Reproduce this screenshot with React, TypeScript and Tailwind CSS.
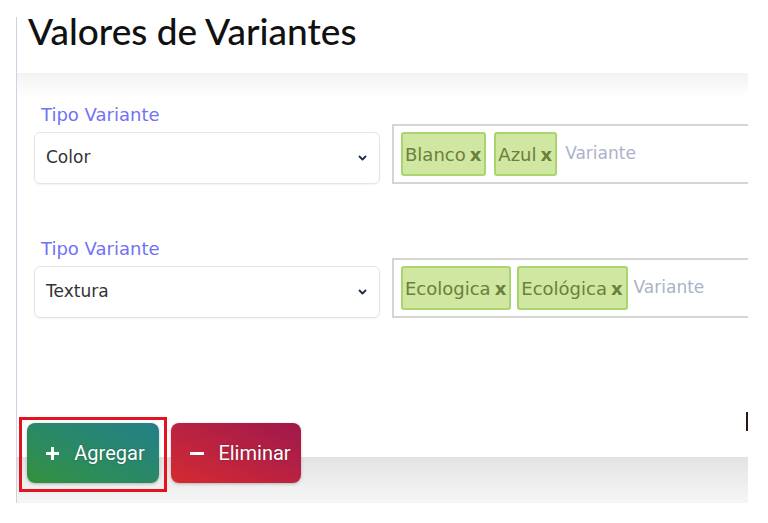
function Chevron() {
  return (
    <svg width="9" height="6" viewBox="0 0 9 6" className="shrink-0">
      <path d="M1.5 1.5 L4.5 4.5 L7.5 1.5" fill="none" stroke="#1e2a4a" strokeWidth="1.8" strokeLinecap="round" strokeLinejoin="round" />
    </svg>
  );
}

function Tag({ label }: { label: string }) {
  return (
    <span className="flex h-[44px] items-center gap-[4px] rounded-[3px] border-2 border-[#a9d46e] bg-[#d0e7a1] pl-[2px] pr-[3px] text-[18px] text-[#6c7f3c]">
      {label}
      <span className="font-bold">x</span>
    </span>
  );
}

function VariantRow({ tipo, values, gap }: { tipo: string; values: string[]; gap: string }) {
  return (
    <div className="flex items-end gap-3">
      <div className="flex w-[346px] shrink-0 flex-col">
        <label className="mb-[6px] pl-[7px] text-[18px] leading-[22px] text-[#7272f7]">Tipo Variante</label>
        <div className="flex h-[52px] items-center justify-between rounded-md border border-[#e4e4e4] pl-[11px] pr-[12px] text-[17px] text-[#333] shadow-[0_1px_2px_rgba(0,0,0,0.05)]">
          <span>{tipo}</span>
          <Chevron />
        </div>
      </div>
      <div className={`flex h-[60px] flex-1 items-center border-2 border-r-0 border-[#d5d5d5] pl-[7px] ${gap}`}>
        {values.map((v) => (
          <Tag key={v} label={v} />
        ))}
        <span className="text-[17px] text-[#aab2c8]">Variante</span>
      </div>
    </div>
  );
}

export default function App() {
  return (
    <div className="h-[523px] w-full bg-white pl-4 pt-[17px]" style={{ fontFamily: '"DejaVu Sans", Verdana, sans-serif' }}>
      <div className="flex h-[486px] w-[732px] flex-col border-l border-[#cbd4e3]">
        {/* Title */}
        <h1 className="-mt-[8px] h-[64px] pl-[11px] text-[37px] leading-[44px] font-medium text-[#111]" style={{ fontFamily: 'Lato, "Noto Sans", sans-serif' }}>
          Valores de Variantes
        </h1>

        {/* Card */}
        <section className="flex h-[339px] flex-col gap-[54px] bg-[linear-gradient(to_bottom,#f3f3f3,#ffffff_24px)] pl-[17px] pt-[31px]">
          <VariantRow tipo="Color" values={["Blanco", "Azul"]} gap="gap-2" />
          <VariantRow tipo="Textura" values={["Ecologica", "Ecológica"]} gap="gap-[6px]" />
        </section>

        {/* Actions */}
        <div className="flex h-[91px] items-start bg-[linear-gradient(to_bottom,transparent_45px,#e3e3e3_45px,#f6f6f6)] pl-[2px] pt-[5px]" style={{ fontFamily: 'Roboto, "Noto Sans", sans-serif' }}>
          <div className="border-[3px] border-[#e3141f] pb-[6px] pl-[5px] pr-[5px] pt-[3px]">
            <button className="flex h-[60px] w-[132px] items-center justify-center gap-[15px] rounded-[8px] bg-linear-to-tr from-[#34913a] to-[#237f88] pl-[5px] text-[20px] text-white shadow-[0_1px_3px_rgba(0,0,0,0.25)] [text-shadow:0_0_2px_rgba(0,0,0,0.35)]">
              <span className="relative h-[13px] w-[13px] shrink-0">
                <span className="absolute left-0 top-[5px] h-[3px] w-[13px] bg-white" />
                <span className="absolute left-[5px] top-0 h-[13px] w-[3px] bg-white" />
              </span>
              Agregar
            </button>
          </div>
          <button className="ml-1 mt-[6px] flex h-[60px] w-[130px] items-center justify-center gap-[14px] rounded-[8px] bg-linear-to-tr from-[#d52a2f] to-[#9f184b] pl-[9px] text-[20px] text-white shadow-[0_1px_3px_rgba(0,0,0,0.25)] [text-shadow:0_0_2px_rgba(0,0,0,0.35)]">
            <span className="h-[3px] w-[14px] shrink-0 bg-white" />
            Eliminar
          </button>
          <div className="ml-auto -mt-[5px] h-[19px] w-[2px] bg-[#2a1a14]" />
        </div>
      </div>
    </div>
  );
}
